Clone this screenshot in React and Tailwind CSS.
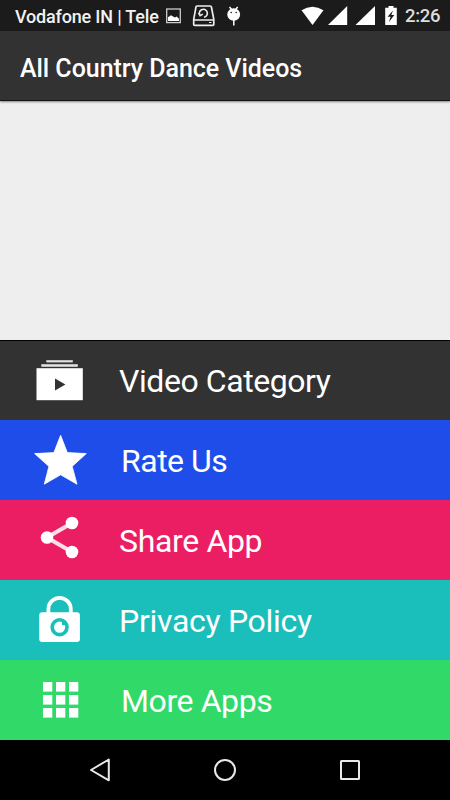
const menu = [
  { label: 'Video Category', row: 'bg-[#323232] border-t border-black', text: 'pl-[9px] tracking-[-0.43px]', Icon: VideoIcon },
  { label: 'Rate Us', row: 'bg-[#1e4dea]', text: 'pl-[11px] pt-px tracking-[-0.5px]', Icon: StarIcon },
  { label: 'Share App', row: 'bg-[#eb1e63]', text: 'pl-[9px] pt-px tracking-[-0.35px]', Icon: ShareIcon },
  { label: 'Privacy Policy', row: 'bg-[#1abebb]', text: 'pl-[9px] pt-px tracking-[-0.3px]', Icon: LockIcon },
  { label: 'More Apps', row: 'bg-[#30d968]', text: 'pl-[11px] pt-px tracking-[-0.4px]', Icon: GridIcon },
];

function RowSvg({ children }) {
  return (
    <svg className="h-20 w-[90px] shrink-0" viewBox="0 0 90 80" fill="#fff">
      {children}
    </svg>
  );
}

function VideoIcon() {
  return (
    <RowSvg>
      <rect x="26.3" y="19.2" width="26.5" height="2.2" fill="#e4e0e4" />
      <rect x="21.3" y="23.2" width="36.5" height="2.6" fill="#e4e0e4" />
      <rect x="16.5" y="27.2" width="46.3" height="32" />
      <path d="M35 37.4 45.4 43.4 35 49.6Z" fill="#323232" />
    </RowSvg>
  );
}

function StarIcon() {
  return (
    <RowSvg>
      <path
        d="M40.6 15.3 47.3 32.6 66.3 33.6 52.2 46.4 57 64.2 40.6 54.8 24.3 64.2 28.9 46.4 14.6 33.6 33.9 32.6Z"
        stroke="#fff"
        strokeWidth="0.8"
        strokeLinejoin="round"
      />
    </RowSvg>
  );
}

function ShareIcon() {
  return (
    <RowSvg>
      <path d="M52 23 27 37.5 52 52" fill="none" stroke="#fbdce8" strokeWidth="4.2" />
      <circle cx="52" cy="23" r="6.3" />
      <circle cx="27" cy="37.5" r="6.3" />
      <circle cx="52" cy="52" r="6.3" />
    </RowSvg>
  );
}

function LockIcon() {
  return (
    <RowSvg>
      <path d="M28.4 33V29a11.2 11.2 0 0 1 22.4 0V33" fill="none" stroke="#fff" strokeWidth="3.8" />
      <rect x="19.2" y="32.3" width="40.7" height="29.8" rx="3" />
      <circle cx="39.6" cy="47.2" r="7.4" fill="#fff" stroke="#1abebb" strokeWidth="3.6" />
      <path d="M42 41.3v3.8h4.3v-3.8Z" fill="#1abebb" />
    </RowSvg>
  );
}

function GridIcon() {
  return (
    <RowSvg>
      {[22, 35, 48].map((y) =>
        [23, 36, 49].map((x) => <rect key={`${x}-${y}`} x={x} y={y} width="9.3" height="9.6" />)
      )}
    </RowSvg>
  );
}

function StatusBar() {
  return (
    <header className="flex h-[31px] bg-[#1b1b1b] text-[#f2f2f2]">
      <span className="w-[160px] shrink-0 pl-[15px] text-[18px] font-medium leading-[34px] tracking-[-0.18px] whitespace-nowrap">
        Vodafone IN | Tele
      </span>
      <svg className="h-[31px] w-[90px] shrink-0" viewBox="0 0 90 31">
        <rect x="6.7" y="9" width="13.6" height="13.6" fill="none" stroke="#ccc" strokeWidth="1.3" />
        <path d="M8 20.9v-3.6l3-2 1.6 1 2.4 1.2 1.7-1 2.3 2.2v2.2Z" fill="#fff" />
        <path d="M37 6h13.2q1 0 1.2 1l2.4 12.4v5q0 .9-1 .9H34.7q-1 0-1-.9v-5L36 7q.1-1 1-1ZM34 20h19.5" fill="none" stroke="#eee" strokeWidth="1.7" />
        <path d="M40.2 15.7a4 4 0 1 1 3.8 1.5M38.5 12.8l1.6 2.9 2.7-1.6" fill="none" stroke="#eee" strokeWidth="1.6" />
        <path d="M49 22.5h2.5" stroke="#eee" strokeWidth="1" />
        <path d="M69.5 7 72 10M77.7 7l-2.5 3M73.8 20v5.5" stroke="#fff" strokeWidth="1.5" />
        <ellipse cx="73.7" cy="14.5" rx="6.4" ry="6.2" fill="#fff" />
        <circle cx="71.2" cy="12.5" r=".8" fill="#1b1b1b" />
        <circle cx="76.2" cy="12.5" r=".8" fill="#1b1b1b" />
      </svg>
      <svg className="ml-10 h-[31px] w-[115px] shrink-0" viewBox="0 0 115 31" fill="#fff">
        <path d="M11.5 10.3q11-7 22 0L22.5 25Z" />
        <path d="M57.2 6v19H38Z" />
        <path d="M85 6v19H65.5Z" />
        <path d="M98.5 6h5v1.8h3.3V25H95.2V7.8h3.3Z" />
        <path d="m103 10.5-5.4 6.3h3l-1.6 5.2 5.3-6.9h-3Z" fill="#1b1b1b" />
      </svg>
      <span className="text-[18.5px] font-medium leading-[33px] tracking-[-0.3px] whitespace-nowrap text-[#dedede]">2:26</span>
    </header>
  );
}

function NavBar() {
  return (
    <nav className="h-[60px] bg-black">
      <svg className="h-[60px] w-full" viewBox="0 0 450 60" fill="none" stroke="#e8e8e8" strokeWidth="2">
        <path d="M108.8 19.5v20.8L91 30Z" strokeLinejoin="round" />
        <circle cx="225" cy="30" r="10" />
        <rect x="341" y="21" width="18" height="18" rx=".5" />
      </svg>
    </nav>
  );
}

export default function App() {
  return (
    <div className="flex h-[800px] w-[450px] flex-col overflow-hidden bg-[#eeeeee] font-['Roboto',sans-serif]">
      <StatusBar />
      <div className="flex h-[70px] items-center border-b border-[#141414] bg-[#323232] pl-5 pt-[5px] shadow-[0_1px_2px_rgba(0,0,0,0.45)]">
        <h1 className="text-[25px] font-medium leading-none tracking-[-0.04px] whitespace-nowrap text-white">All Country Dance Videos</h1>
      </div>
      <main className="flex flex-1 flex-col justify-end">
        {menu.map(({ label, row, text, Icon }) => (
          <button key={label} className={`flex h-20 w-full items-center overflow-hidden pl-5 text-left text-white ${row}`}>
            <Icon />
            <span className={`text-[32px] leading-10 whitespace-nowrap ${text}`}>{label}</span>
          </button>
        ))}
      </main>
      <NavBar />
    </div>
  );
}
